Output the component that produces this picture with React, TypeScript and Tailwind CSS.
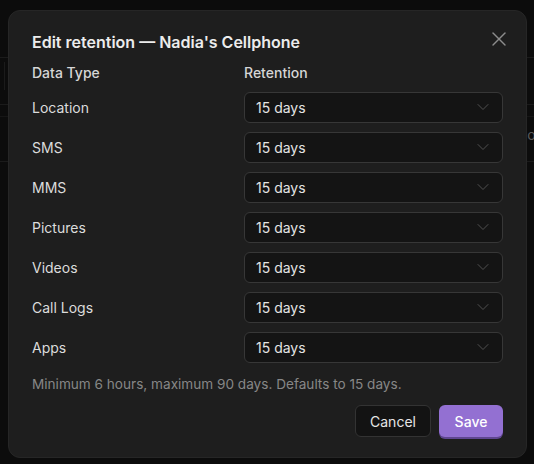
import { ChevronDown, X } from 'lucide-react';

const dataTypes = ['Location', 'SMS', 'MMS', 'Pictures', 'Videos', 'Call Logs', 'Apps'];

function RetentionSelect({ value }: { value: string }) {
  return (
    <button className="h-[31px] w-full flex items-center justify-between rounded-md border border-[#373737] bg-[#141414] pl-[11px] pr-[9px] text-[14px] text-[#e4e4e4]">
      <span>{value}</span>
      <ChevronDown size={20} strokeWidth={1.1} className="text-[#555555]" />
    </button>
  );
}

export default function App() {
  return (
    <div
      className="relative h-[464px] w-[534px] overflow-hidden bg-[#0c0c0c]"
      style={{ fontFamily: 'Inter, "Noto Sans", sans-serif' }}
    >
      {/* page behind the overlay */}
      <div className="flex flex-col">
        <div className="h-[58px] border-b border-[#1b1b1b]" />
        <div className="h-[47px] border-b border-[#1b1b1b] flex">
          <div className="ml-1 mt-1 h-[28px] w-px bg-[#1b1b1b]" />
        </div>
        <div className="h-[12px] border-b border-[#161616]" />
        <div className="h-[45px] border-b border-[#1b1b1b] flex items-start justify-end pt-[7px]">
          <span className="-mr-[10px] text-[14px] text-[#5a5a5a]">on</span>
        </div>
      </div>

      {/* dialog */}
      <div className="absolute left-[8px] top-[10px] w-[519px] h-[448px] rounded-xl border border-[#262626] bg-[#1e1e1e] px-[23px] pt-[19px] pb-5 flex flex-col">
        <div className="flex items-center justify-between h-6">
          <h2 className="text-[16px] font-semibold text-[#ececec]">
            Edit retention — Nadia's Cellphone
          </h2>
          <X size={24} strokeWidth={1.4} className="-mr-[8px] -mt-[6px] text-[#8c8c8c]" />
        </div>

        <div className="mt-[8px] grid grid-cols-[212px_1fr] h-5 items-center text-[14px] font-medium text-[#d6d6d6]">
          <span>Data Type</span>
          <span>Retention</span>
        </div>

        <div className="mt-[5px] flex flex-col">
          {dataTypes.map((t) => (
            <div key={t} className="grid grid-cols-[212px_1fr] h-10 items-center">
              <span className="text-[14px] text-[#dcdcdc]">{t}</span>
              <RetentionSelect value="15 days" />
            </div>
          ))}
        </div>

        <p className="mt-[7px] text-[13.6px] leading-5 text-[#878787]">
          Minimum 6 hours, maximum 90 days. Defaults to 15 days.
        </p>

        <div className="mt-[11px] flex justify-end gap-2">
          <button className="h-8 w-[76px] rounded-md border border-[#333333] bg-[#131313] text-[14px] text-[#e6e6e6]">
            Cancel
          </button>
          <button className="h-8 w-[64px] rounded-md bg-[#9370d2] text-[14px] font-medium text-white shadow-[0_2px_0_#5f4690]">
            Save
          </button>
        </div>
      </div>
    </div>
  );
}
